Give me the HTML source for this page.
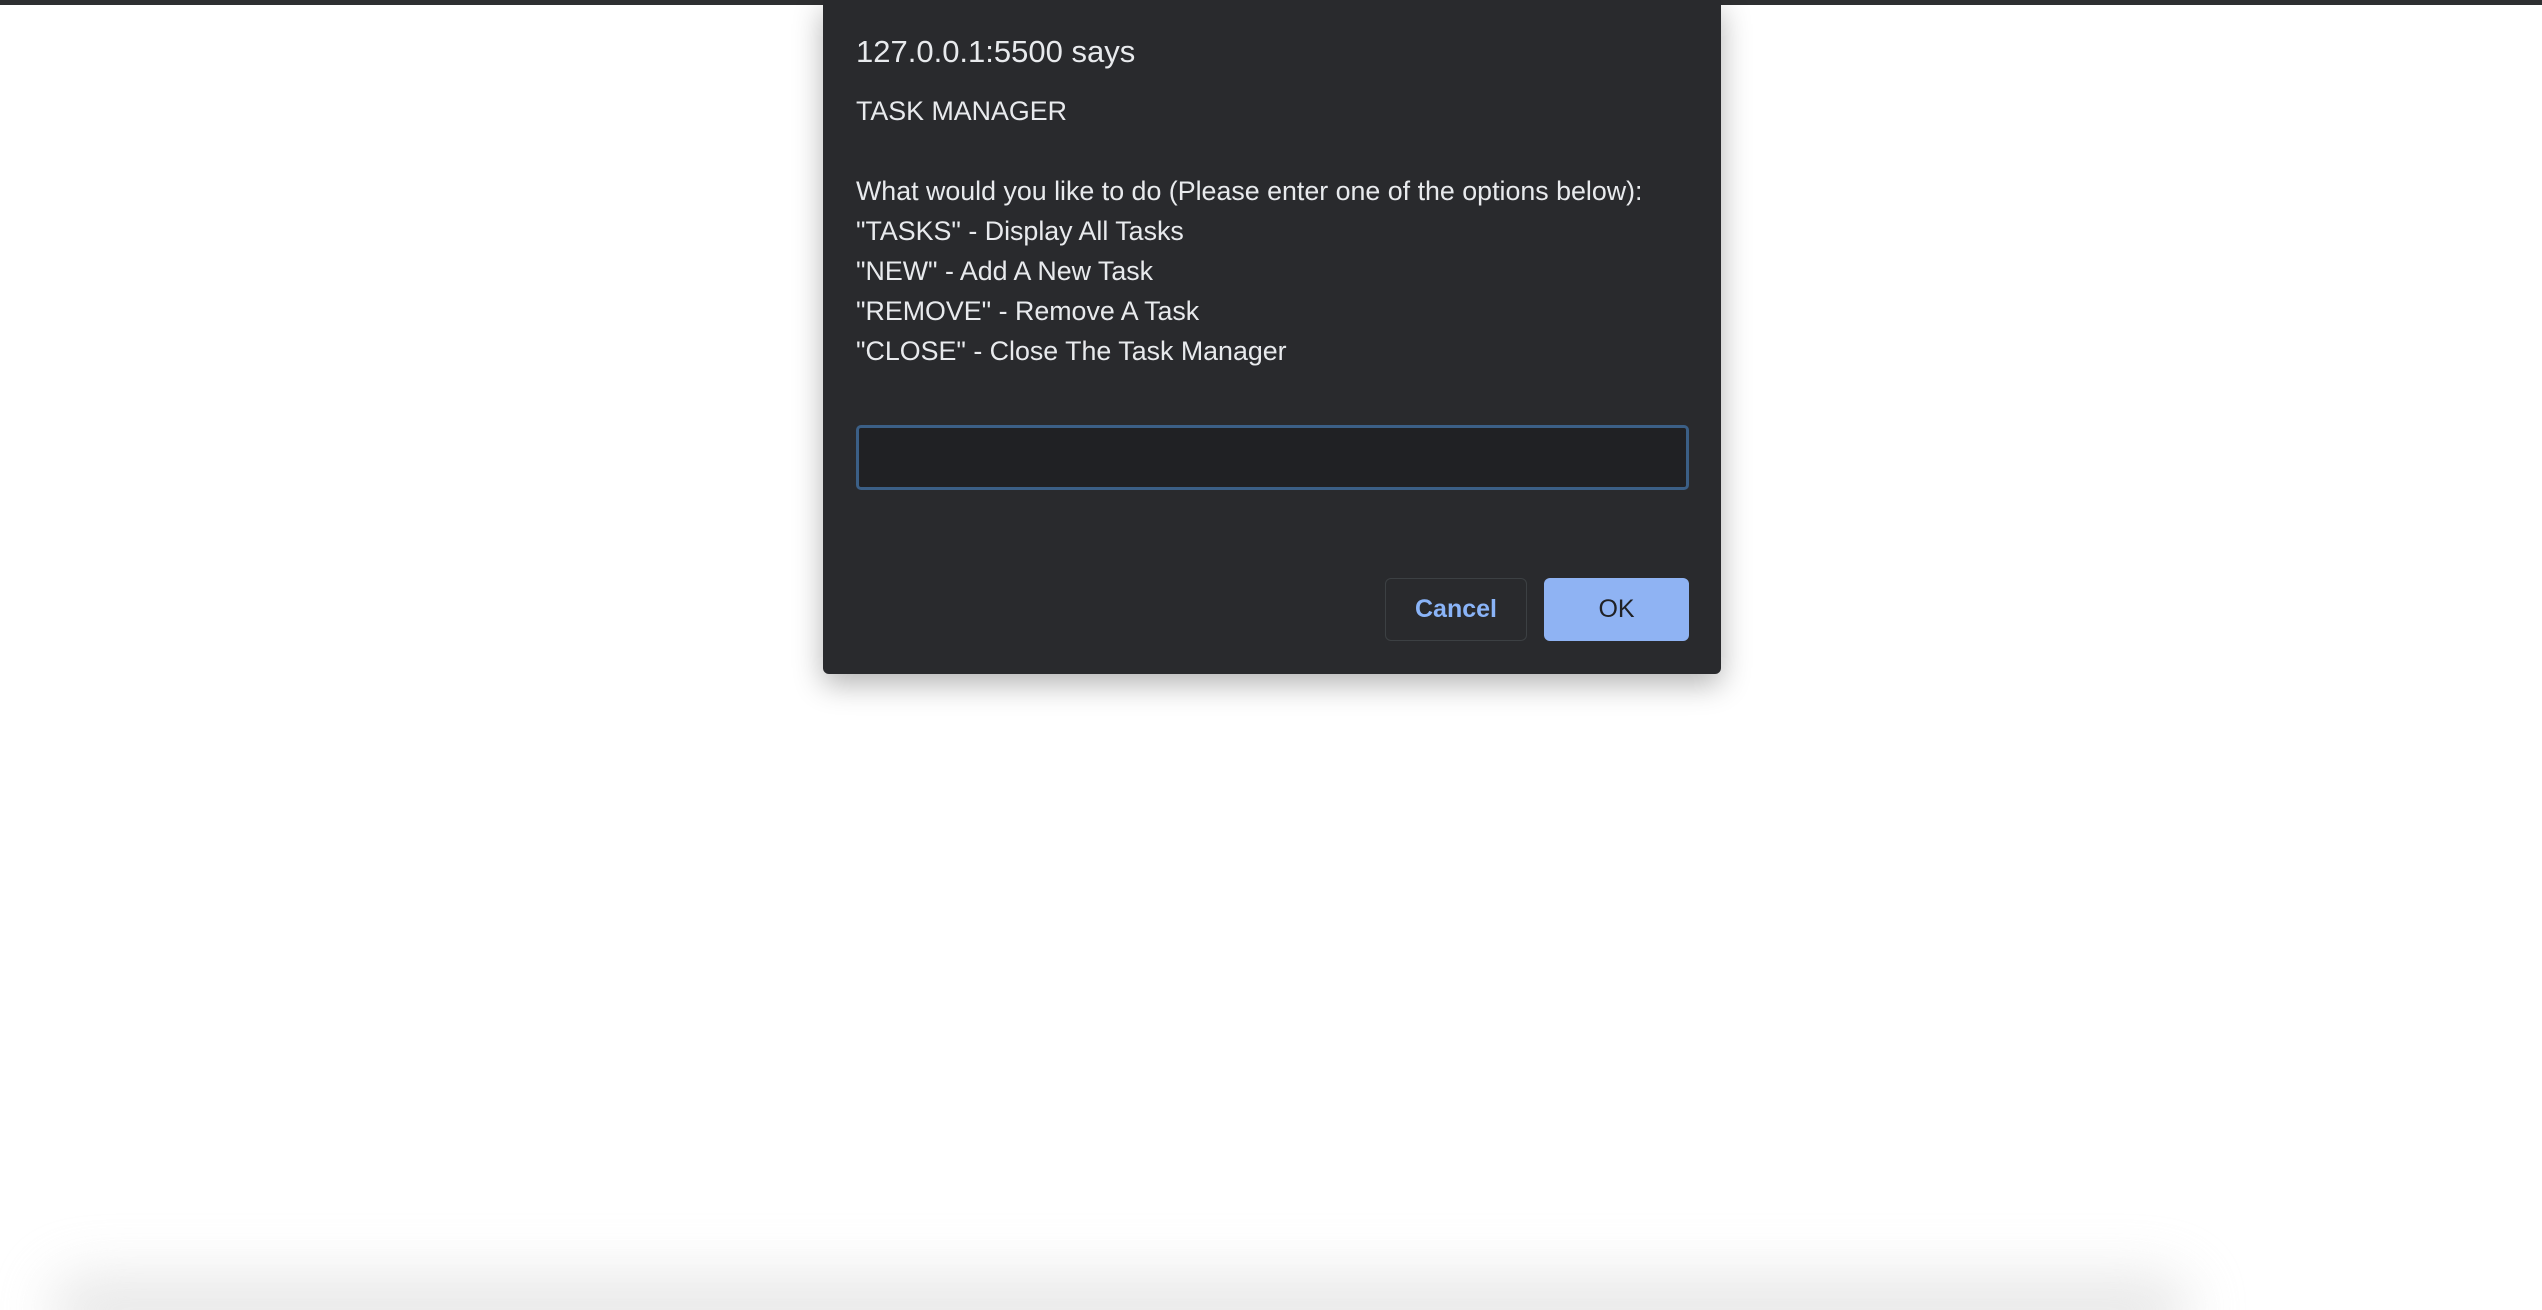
<!DOCTYPE html>
<html><head><style>
html,body{margin:0;padding:0;width:2542px;height:1310px;overflow:hidden;background:#fff;font-family:"Liberation Sans",Arial,sans-serif;position:relative}
.wrap{position:absolute;left:0;top:0;width:2542px;height:1310px;overflow:hidden}
.topbar{position:absolute;left:0;top:0;width:2542px;height:5px;background:#2e2f31}
.bshadow{position:absolute;left:50px;width:2140px;top:1275px;height:70px;border-radius:35px;background:#d8d8d8;filter:blur(28px);opacity:.6}
.dlg{position:absolute;left:823px;top:0;width:898px;height:674px;background:#292a2d;border-radius:0 0 6px 6px;box-shadow:0 10px 30px rgba(0,0,0,.3)}
.t{position:absolute;left:33px;color:#e8eaed;white-space:nowrap}
.title{top:34px;font-size:31px}
.msg{top:91px;font-size:26.8px;line-height:40px}
.inp{position:absolute;left:33px;top:425px;width:827px;height:59px;border:3px solid #3b5f86;border-radius:5px;background:#202124}
.btn{position:absolute;top:578px;height:63px;border-radius:6px;font-size:25px;font-weight:bold;display:flex;align-items:center;justify-content:center;box-sizing:border-box}
.cancel{left:562px;width:142px;border:1.5px solid #3c4043;color:#8ab4f8}
.ok{left:721px;width:145px;background:#8fb3f3;color:#202124;font-weight:normal}
</style></head><body>
<div class="wrap">
<div class="topbar"></div>
<div class="bshadow"></div>
<div class="dlg">
<div class="t title">127.0.0.1:5500 says</div>
<div class="t msg">TASK MANAGER<br><br>What would you like to do (Please enter one of the options below):<br>"TASKS" - Display All Tasks<br>"NEW" - Add A New Task<br>"REMOVE" - Remove A Task<br>"CLOSE" - Close The Task Manager</div>
<div class="inp"></div>
<div class="btn cancel">Cancel</div>
<div class="btn ok">OK</div>
</div>
</div>
</body></html>
